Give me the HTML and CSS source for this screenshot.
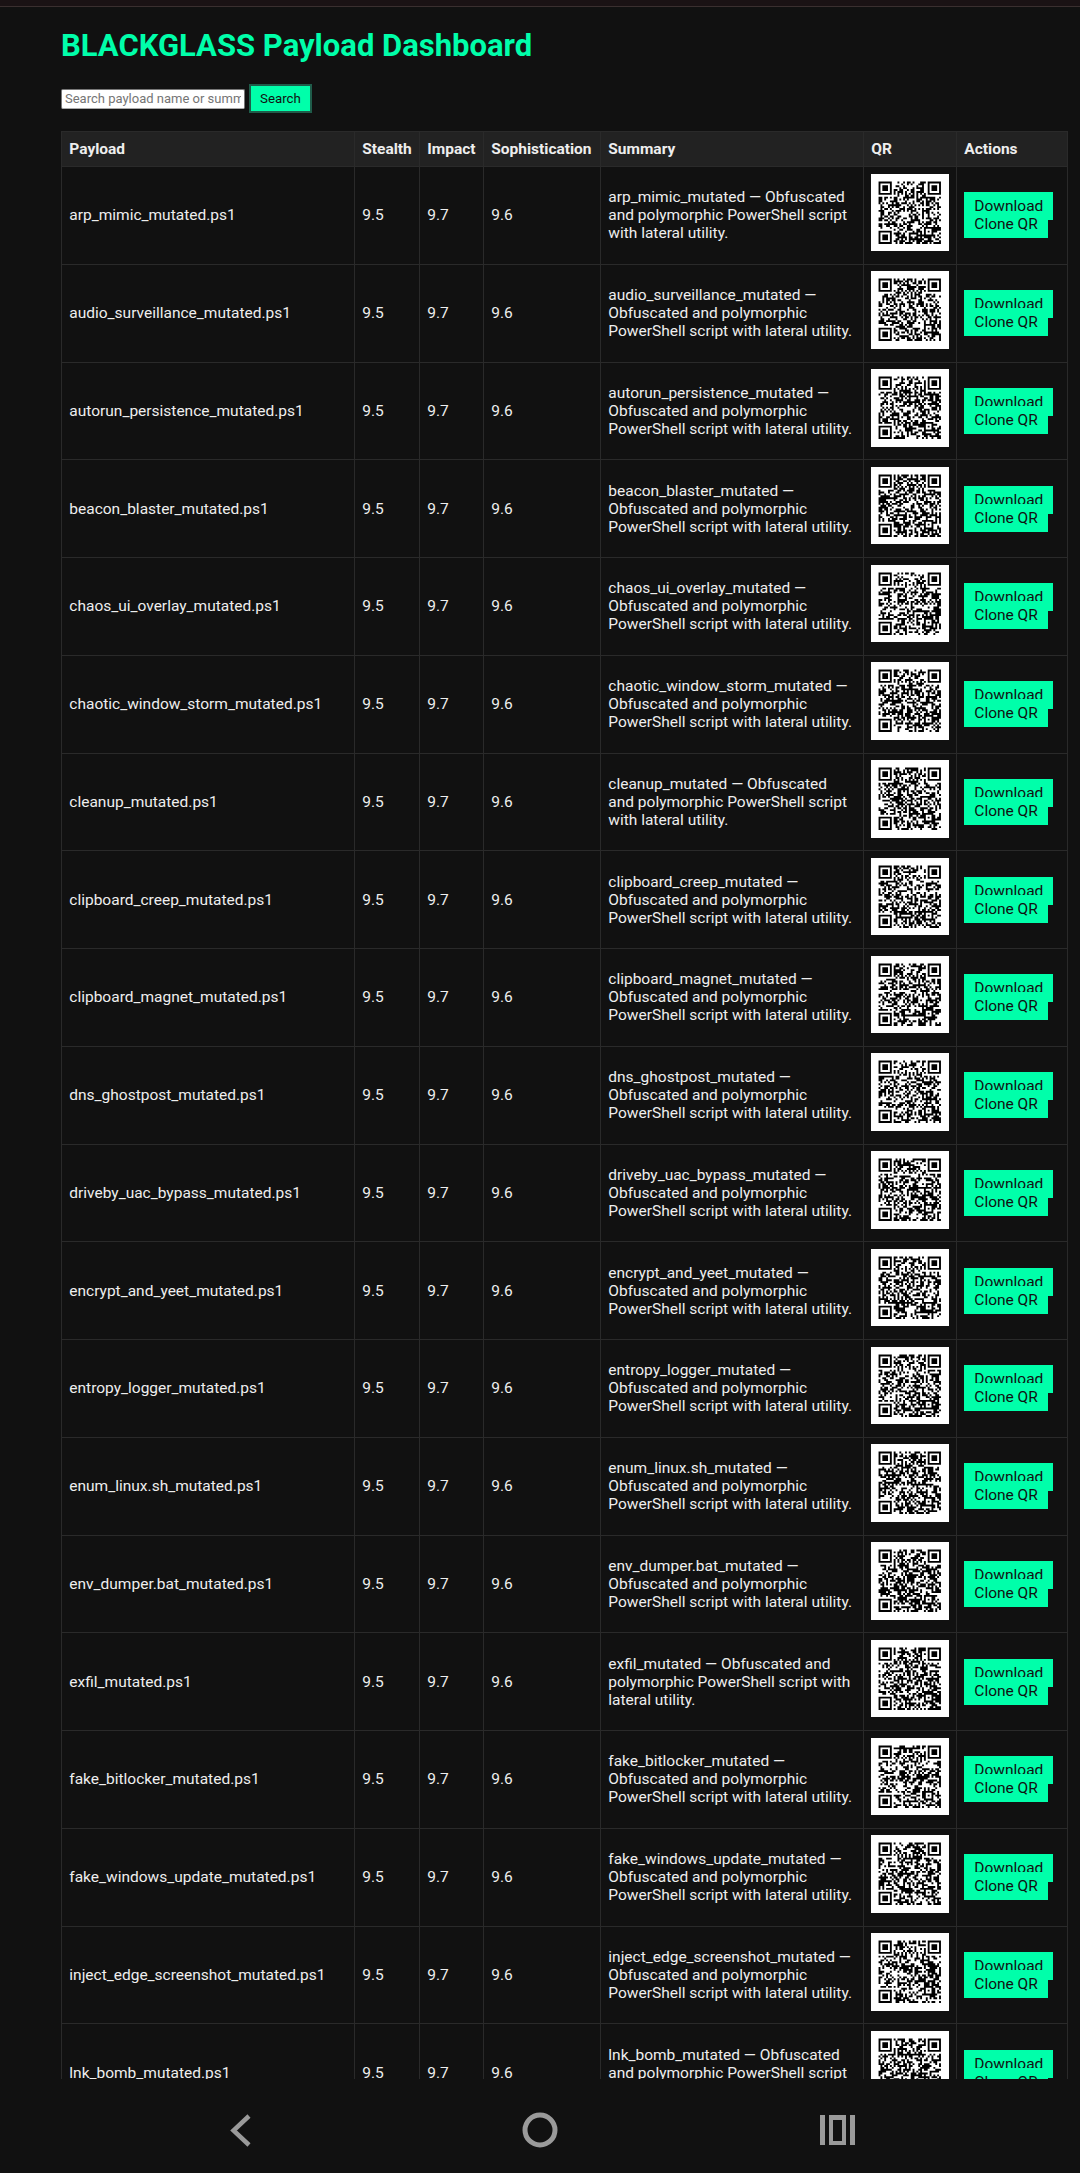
FILE: index.html
```html
<!DOCTYPE html>
<html lang="en">
<head>
<meta charset="utf-8">
<title>BLACKGLASS Payload Dashboard</title>
<link rel="stylesheet" href="styles.css">
</head>
<body>
<div class="status-strip"></div>
<main class="viewport">
<h1 class="title">BLACKGLASS Payload Dashboard</h1>
<form class="search">
<input class="search-input" type="text" placeholder="Search payload name or summary">
<button class="search-button" type="button">Search</button>
</form>
<table class="payloads">
<colgroup><col class="c-name"><col class="c-stealth"><col class="c-impact"><col class="c-soph"><col class="c-summary"><col class="c-qr"><col class="c-actions"></colgroup>
<thead><tr><th>Payload</th><th>Stealth</th><th>Impact</th><th>Sophistication</th><th>Summary</th><th>QR</th><th>Actions</th></tr></thead>
<tbody>
<tr><td>arp_mimic_mutated.ps1</td><td>9.5</td><td>9.7</td><td>9.6</td><td>arp_mimic_mutated — Obfuscated and polymorphic PowerShell script with lateral utility.</td><td><svg class="qr" viewBox="0 0 41 41"></svg></td><td><a class="action">Download</a> <a class="action">Clone QR</a></td></tr>
<tr><td>audio_surveillance_mutated.ps1</td><td>9.5</td><td>9.7</td><td>9.6</td><td>audio_surveillance_mutated — Obfuscated and polymorphic PowerShell script with lateral utility.</td><td><svg class="qr" viewBox="0 0 41 41"></svg></td><td><a class="action">Download</a> <a class="action">Clone QR</a></td></tr>
<tr><td>autorun_persistence_mutated.ps1</td><td>9.5</td><td>9.7</td><td>9.6</td><td>autorun_persistence_mutated — Obfuscated and polymorphic PowerShell script with lateral utility.</td><td><svg class="qr" viewBox="0 0 41 41"></svg></td><td><a class="action">Download</a> <a class="action">Clone QR</a></td></tr>
<tr><td>beacon_blaster_mutated.ps1</td><td>9.5</td><td>9.7</td><td>9.6</td><td>beacon_blaster_mutated — Obfuscated and polymorphic PowerShell script with lateral utility.</td><td><svg class="qr" viewBox="0 0 41 41"></svg></td><td><a class="action">Download</a> <a class="action">Clone QR</a></td></tr>
<tr><td>chaos_ui_overlay_mutated.ps1</td><td>9.5</td><td>9.7</td><td>9.6</td><td>chaos_ui_overlay_mutated — Obfuscated and polymorphic PowerShell script with lateral utility.</td><td><svg class="qr" viewBox="0 0 41 41"></svg></td><td><a class="action">Download</a> <a class="action">Clone QR</a></td></tr>
<tr><td>chaotic_window_storm_mutated.ps1</td><td>9.5</td><td>9.7</td><td>9.6</td><td>chaotic_window_storm_mutated — Obfuscated and polymorphic PowerShell script with lateral utility.</td><td><svg class="qr" viewBox="0 0 41 41"></svg></td><td><a class="action">Download</a> <a class="action">Clone QR</a></td></tr>
<tr><td>cleanup_mutated.ps1</td><td>9.5</td><td>9.7</td><td>9.6</td><td>cleanup_mutated — Obfuscated and polymorphic PowerShell script with lateral utility.</td><td><svg class="qr" viewBox="0 0 41 41"></svg></td><td><a class="action">Download</a> <a class="action">Clone QR</a></td></tr>
<tr><td>clipboard_creep_mutated.ps1</td><td>9.5</td><td>9.7</td><td>9.6</td><td>clipboard_creep_mutated — Obfuscated and polymorphic PowerShell script with lateral utility.</td><td><svg class="qr" viewBox="0 0 41 41"></svg></td><td><a class="action">Download</a> <a class="action">Clone QR</a></td></tr>
<tr><td>clipboard_magnet_mutated.ps1</td><td>9.5</td><td>9.7</td><td>9.6</td><td>clipboard_magnet_mutated — Obfuscated and polymorphic PowerShell script with lateral utility.</td><td><svg class="qr" viewBox="0 0 41 41"></svg></td><td><a class="action">Download</a> <a class="action">Clone QR</a></td></tr>
<tr><td>dns_ghostpost_mutated.ps1</td><td>9.5</td><td>9.7</td><td>9.6</td><td>dns_ghostpost_mutated — Obfuscated and polymorphic PowerShell script with lateral utility.</td><td><svg class="qr" viewBox="0 0 41 41"></svg></td><td><a class="action">Download</a> <a class="action">Clone QR</a></td></tr>
<tr><td>driveby_uac_bypass_mutated.ps1</td><td>9.5</td><td>9.7</td><td>9.6</td><td>driveby_uac_bypass_mutated — Obfuscated and polymorphic PowerShell script with lateral utility.</td><td><svg class="qr" viewBox="0 0 41 41"></svg></td><td><a class="action">Download</a> <a class="action">Clone QR</a></td></tr>
<tr><td>encrypt_and_yeet_mutated.ps1</td><td>9.5</td><td>9.7</td><td>9.6</td><td>encrypt_and_yeet_mutated — Obfuscated and polymorphic PowerShell script with lateral utility.</td><td><svg class="qr" viewBox="0 0 41 41"></svg></td><td><a class="action">Download</a> <a class="action">Clone QR</a></td></tr>
<tr><td>entropy_logger_mutated.ps1</td><td>9.5</td><td>9.7</td><td>9.6</td><td>entropy_logger_mutated — Obfuscated and polymorphic PowerShell script with lateral utility.</td><td><svg class="qr" viewBox="0 0 41 41"></svg></td><td><a class="action">Download</a> <a class="action">Clone QR</a></td></tr>
<tr><td>enum_linux.sh_mutated.ps1</td><td>9.5</td><td>9.7</td><td>9.6</td><td>enum_linux.sh_mutated — Obfuscated and polymorphic PowerShell script with lateral utility.</td><td><svg class="qr" viewBox="0 0 41 41"></svg></td><td><a class="action">Download</a> <a class="action">Clone QR</a></td></tr>
<tr><td>env_dumper.bat_mutated.ps1</td><td>9.5</td><td>9.7</td><td>9.6</td><td>env_dumper.bat_mutated — Obfuscated and polymorphic PowerShell script with lateral utility.</td><td><svg class="qr" viewBox="0 0 41 41"></svg></td><td><a class="action">Download</a> <a class="action">Clone QR</a></td></tr>
<tr><td>exfil_mutated.ps1</td><td>9.5</td><td>9.7</td><td>9.6</td><td>exfil_mutated — Obfuscated and polymorphic PowerShell script with lateral utility.</td><td><svg class="qr" viewBox="0 0 41 41"></svg></td><td><a class="action">Download</a> <a class="action">Clone QR</a></td></tr>
<tr><td>fake_bitlocker_mutated.ps1</td><td>9.5</td><td>9.7</td><td>9.6</td><td>fake_bitlocker_mutated — Obfuscated and polymorphic PowerShell script with lateral utility.</td><td><svg class="qr" viewBox="0 0 41 41"></svg></td><td><a class="action">Download</a> <a class="action">Clone QR</a></td></tr>
<tr><td>fake_windows_update_mutated.ps1</td><td>9.5</td><td>9.7</td><td>9.6</td><td>fake_windows_update_mutated — Obfuscated and polymorphic PowerShell script with lateral utility.</td><td><svg class="qr" viewBox="0 0 41 41"></svg></td><td><a class="action">Download</a> <a class="action">Clone QR</a></td></tr>
<tr><td>inject_edge_screenshot_mutated.ps1</td><td>9.5</td><td>9.7</td><td>9.6</td><td>inject_edge_screenshot_mutated — Obfuscated and polymorphic PowerShell script with lateral utility.</td><td><svg class="qr" viewBox="0 0 41 41"></svg></td><td><a class="action">Download</a> <a class="action">Clone QR</a></td></tr>
<tr><td>lnk_bomb_mutated.ps1</td><td>9.5</td><td>9.7</td><td>9.6</td><td>lnk_bomb_mutated — Obfuscated and polymorphic PowerShell script with lateral utility.</td><td><svg class="qr" viewBox="0 0 41 41"></svg></td><td><a class="action">Download</a> <a class="action">Clone QR</a></td></tr>
</tbody>
</table>
</main>
<nav class="navbar">
<svg class="nav-icon" viewBox="0 0 30 40"><path class="nav-stroke back-stroke" d="M23 6 L7.5 20.5 L23 35"/></svg>
<svg class="nav-icon" viewBox="0 0 40 40"><circle class="nav-stroke" cx="20" cy="20" r="15"/></svg>
<svg class="nav-icon" viewBox="0 0 40 40"><path class="nav-fill" fill-rule="evenodd" d="M2 5h5v30H2zM11 5h17v30H11zM15 10v21h9V10zM32 5h5v30h-5z"/></svg>
</nav>
<script src="qr.js"></script>
</body>
</html>
```
FILE: styles.css
```css
* { box-sizing: border-box; }
html, body { margin: 0; height: 100%; }
body {
  display: flex;
  flex-direction: column;
  height: 2173px;
  overflow: hidden;
  background: #111;
  color: #eee;
  font-family: Roboto, "Liberation Sans", sans-serif;
  font-size: 15.5px;
  line-height: 18px;
}
.status-strip {
  flex: none;
  height: 7px;
  background: #1a1214;
  border-bottom: 1px solid #3a2f2f;
}
.viewport {
  flex: 1;
  min-height: 0;
  overflow: hidden;
  padding: 20px 13px 0 61px;
}
.title {
  margin: 0 0 19px;
  font-size: 31px;
  line-height: 38px;
  font-weight: 700;
  color: #00ffaa;
}
.search {
  display: flex;
  align-items: center;
  gap: 4px;
  height: 29px;
  margin-bottom: 18px;
}
.search-input {
  width: 184px;
  height: 20px;
  padding: 0 3px;
  border: 1px solid #777;
  border-bottom-color: #aaa;
  border-radius: 2px;
  background: #fff;
  font: 13px Roboto, sans-serif;
  color: #111;
}
.search-input::placeholder { color: #757575; }
.search-button {
  width: 63px;
  height: 29px;
  padding: 0;
  border: 2px solid #1f5c4a;
  background: #00ffaa;
  color: #111;
  font: 13.3px Roboto, sans-serif;
}
.payloads {
  width: 1006px;
  table-layout: fixed;
  border-collapse: collapse;
}
.c-name { width: 293px; }
.c-stealth { width: 65px; }
.c-impact { width: 64px; }
.c-soph { width: 117px; }
.c-summary { width: 263px; }
.c-qr { width: 93px; }
.c-actions { width: 111px; }
.payloads th, .payloads td {
  padding: 8px 8px 8px 7.3px;
  border: 1px solid #2a2a2a;
  text-align: left;
  vertical-align: middle;
}
.payloads th {
  height: 35px;
  background: #222;
  font-weight: 700;
}
.payloads td { height: 97.75px; }
.qr {
  display: block;
  width: 77.5px;
  height: 77.5px;
  margin: -3px 0 3px;
  background: #fff;
}
.action {
  padding: 5px 10px;
  background: #00ffaa;
  color: #111;
}
tbody tr:first-child .action + .action { padding-top: 4px; }
.navbar {
  flex: none;
  height: 94px;
  display: grid;
  grid-template-columns: 238px 1fr 238px;
}
.nav-icon { display: block; width: 40px; height: 40px; margin: 31px auto 0; }
.navbar .nav-icon:nth-child(1) { width: 30px; margin: 31px 0 0 226px; }
.navbar .nav-icon:nth-child(3) { margin: 31px 0 0 -24px; }
.nav-stroke { fill: none; stroke: #9a9a9a; stroke-width: 5; }
.back-stroke { stroke-width: 4.5; }
.nav-fill { fill: #9a9a9a; }
```
FILE: qr.js
```js
// Draws a QR-style module grid (33 modules, 4 module quiet zone) for each row.
var NS = "http://www.w3.org/2000/svg";
var SIZE = 33;

function finder(g, x, y) {
  for (var j = -1; j < 8; j++) {
    for (var i = -1; i < 8; i++) {
      var a = x + i, b = y + j;
      if (a < 0 || b < 0 || a >= SIZE || b >= SIZE) continue;
      var ring = i === 0 || i === 6 || j === 0 || j === 6;
      var core = i >= 2 && i <= 4 && j >= 2 && j <= 4;
      var inside = i >= 0 && i <= 6 && j >= 0 && j <= 6;
      g[b][a] = inside && (ring || core) ? 1 : 0;
    }
  }
}

document.querySelectorAll(".qr").forEach(function (svg, index) {
  var seed = 12345 + index * 7919;
  function rnd() {
    seed = (seed * 1664525 + 1013904223) % 4294967296;
    return seed / 4294967296;
  }
  var g = [];
  for (var y = 0; y < SIZE; y++) {
    g.push([]);
    for (var x = 0; x < SIZE; x++) g[y].push(rnd() < 0.52 ? 1 : 0);
  }
  for (var t = 8; t < SIZE - 8; t++) {
    g[6][t] = t % 2 ? 0 : 1;
    g[t][6] = t % 2 ? 0 : 1;
  }
  finder(g, 0, 0);
  finder(g, SIZE - 7, 0);
  finder(g, 0, SIZE - 7);
  for (var v = -2; v <= 2; v++) {
    for (var u = -2; u <= 2; u++) {
      var edge = Math.max(Math.abs(u), Math.abs(v));
      g[26 + v][26 + u] = edge === 1 ? 0 : 1;
    }
  }
  var d = "";
  for (var r = 0; r < SIZE; r++) {
    for (var c = 0; c < SIZE; c++) {
      if (g[r][c]) d += "M" + (c + 4) + " " + (r + 4) + "h1v1h-1z";
    }
  }
  var path = document.createElementNS(NS, "path");
  path.setAttribute("d", d);
  path.setAttribute("fill", "#000");
  svg.appendChild(path);
});
```
